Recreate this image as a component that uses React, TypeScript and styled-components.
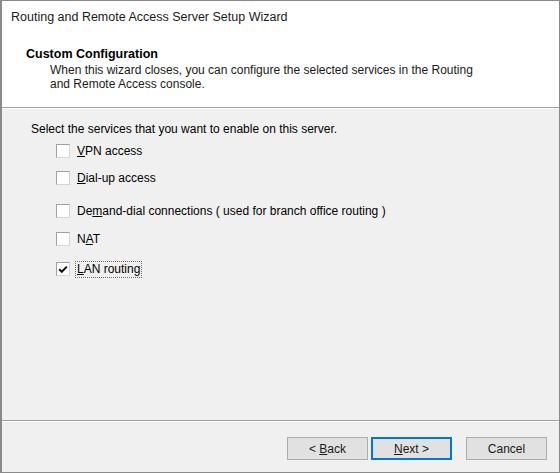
import { memo } from 'react';
import styled, { createGlobalStyle } from 'styled-components';

const GlobalStyle = createGlobalStyle`
    html, body {
        margin: 0;
        padding: 0;
        background: #ffffff;
    }
    body {
        font-family: "Liberation Sans", Arial, sans-serif;
        font-size: 12px;
        color: #000000;
    }
`;

const StyledWindow = styled.div`
    width: 560px;
    height: 473px;
    box-sizing: border-box;
    border: 1px solid #8a8a8a;
    border-left-width: 2px;
    display: flex;
    flex-direction: column;
    background: #f0f0f0;
    overflow: hidden;
`;

const StyledTitleBar = styled.div`
    height: 31px;
    display: flex;
    align-items: center;
    padding-left: 9px;
    background: #ffffff;
    font-size: 12.5px;
    color: #1a1a1a;
`;

const StyledHeader = styled.div`
    height: 76px;
    background: #ffffff;
    padding: 14px 0 0 24px;
    box-sizing: border-box;
    border-bottom: 1px solid #a0a0a0;
    box-shadow: 0 1px 0 #ffffff;
`;

const StyledHeaderTitle = styled.div`
    font-weight: bold;
    font-size: 12.5px;
    line-height: 16px;
`;

const StyledHeaderText = styled.div`
    padding-left: 24px;
    margin-top: 1px;
    line-height: 14px;
    font-size: 12px;
    color: #1a1a1a;
`;

const StyledBody = styled.div`
    flex: 1;
    padding: 14px 0 0 29px;
    display: flex;
    flex-direction: column;
`;

const StyledPrompt = styled.div`
    line-height: 14px;
    font-size: 12px;
`;

const StyledOptions = styled.div`
    display: flex;
    flex-direction: column;
    padding-left: 25px;
`;

const StyledOption = styled.label<{ $top: number }>`
    display: flex;
    align-items: center;
    gap: 5px;
    margin-top: ${(p) => p.$top}px;
    height: 16px;
    font-size: 12px;
`;

const StyledBox = styled.span`
    width: 14px;
    height: 14px;
    box-sizing: border-box;
    background: #ffffff;
    border: 1px solid #d4d4d4;
    border-top-color: #a0a0a0;
    border-left-color: #a0a0a0;
    display: flex;
    align-items: center;
    justify-content: center;
`;

const StyledLabel = styled.span<{ $focused?: boolean }>`
    padding: 0 1px;
    line-height: 15px;
    border: 1px dotted ${(p) => (p.$focused ? '#6b6b6b' : 'transparent')};
`;

const StyledFooter = styled.div`
    height: 52px;
    border-top: 1px solid #a0a0a0;
    box-shadow: inset 0 1px 0 #ffffff;
    display: flex;
    align-items: flex-start;
    justify-content: flex-end;
    padding: 16px 12px 0 0;
    box-sizing: border-box;
`;

const StyledButton = styled.button<{ $primary?: boolean; $gap: number }>`
    width: 81px;
    height: 23px;
    margin-left: ${(p) => p.$gap}px;
    box-sizing: border-box;
    background: #e1e1e1;
    border: 1px solid ${(p) => (p.$primary ? '#0078d7' : '#adadad')};
    box-shadow: ${(p) => (p.$primary ? 'inset 0 0 0 1px #0078d7' : 'none')};
    font-family: "Liberation Sans", Arial, sans-serif;
    font-size: 12px;
    color: #1a1a1a;
    padding: 0;
`;

const services = [
    { pre: '', key: 'V', post: 'PN access', top: 7, checked: false },
    { pre: '', key: 'D', post: 'ial-up access', top: 11, checked: false },
    { pre: 'De', key: 'm', post: 'and-dial connections ( used for branch office routing )', top: 17, checked: false },
    { pre: 'N', key: 'A', post: 'T', top: 12, checked: false },
    { pre: '', key: 'L', post: 'AN routing', top: 14, checked: true },
];

function Check() {
    return (
        <svg width="10" height="9" viewBox="0 0 10 9">
            <path d="M1.2 4.2 L3.8 6.8 L8.8 1.6" stroke="#111" strokeWidth="2" fill="none" />
        </svg>
    );
}

function App() {
    return (
        <>
            <GlobalStyle />
            <StyledWindow>
                <StyledTitleBar>Routing and Remote Access Server Setup Wizard</StyledTitleBar>
                <StyledHeader>
                    <StyledHeaderTitle>Custom Configuration</StyledHeaderTitle>
                    <StyledHeaderText>
                        When this wizard closes, you can configure the selected services in the Routing
                        <br />
                        and Remote Access console.
                    </StyledHeaderText>
                </StyledHeader>
                <StyledBody>
                    <StyledPrompt>Select the services that you want to enable on this server.</StyledPrompt>
                    <StyledOptions>
                        {services.map((s) => (
                            <StyledOption key={s.key + s.post} $top={s.top}>
                                <StyledBox>{s.checked && <Check />}</StyledBox>
                                <StyledLabel $focused={s.checked}>
                                    {s.pre}
                                    <u>{s.key}</u>
                                    {s.post}
                                </StyledLabel>
                            </StyledOption>
                        ))}
                    </StyledOptions>
                </StyledBody>
                <StyledFooter>
                    <StyledButton $gap={0}>
                        &lt; <u>B</u>ack
                    </StyledButton>
                    <StyledButton $gap={3} $primary>
                        <u>N</u>ext &gt;
                    </StyledButton>
                    <StyledButton $gap={14}>Cancel</StyledButton>
                </StyledFooter>
            </StyledWindow>
        </>
    );
}

export default memo(App);
